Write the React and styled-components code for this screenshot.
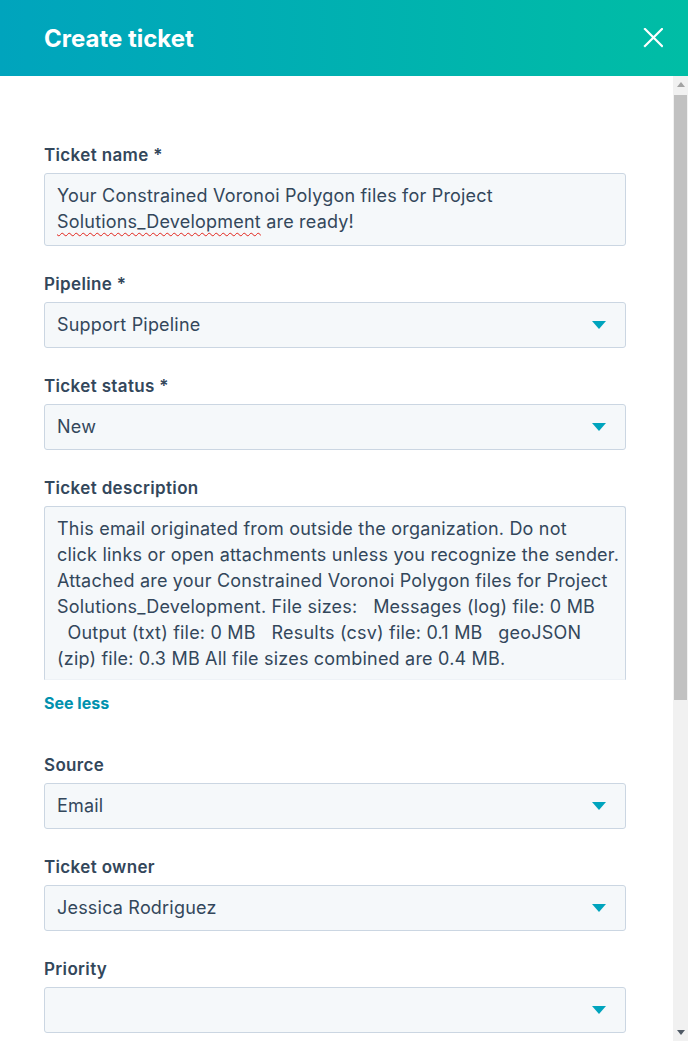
import React from 'react';
import styled, { createGlobalStyle } from 'styled-components';

const GlobalStyle = createGlobalStyle`
  html, body {
    margin: 0;
    padding: 0;
    height: 100%;
    overflow: hidden;
  }
  #root {
    height: 100%;
  }
  * {
    box-sizing: border-box;
  }
`;

const Panel = styled.div`
  height: 100vh;
  display: flex;
  flex-direction: column;
  font-family: Inter, "Liberation Sans", sans-serif;
  color: #33475b;
  background: #fff;
`;

const Header = styled.div`
  height: 76px;
  flex: none;
  display: flex;
  align-items: center;
  justify-content: space-between;
  padding: 0 24px 0 44px;
  background: linear-gradient(90deg, #00a4bd 0%, #00bda5 100%);
`;

const Title = styled.h1`
  margin: 0;
  font-size: 24px;
  font-weight: 700;
  color: #fff;
`;

const CloseButton = styled.button`
  width: 22px;
  height: 22px;
  padding: 0;
  border: none;
  background: transparent;
  display: flex;
  align-items: center;
  justify-content: center;
  cursor: pointer;
`;

const Body = styled.div`
  flex: 1;
  min-height: 0;
  display: flex;
`;

const Content = styled.div`
  flex: 1;
  overflow: hidden;
  padding: 68px 47px 0 44px;
`;

const Scrollbar = styled.div`
  width: 15px;
  flex: none;
  display: flex;
  flex-direction: column;
  background: #f1f1f1;
`;

const ScrollButton = styled.div`
  height: 17px;
  flex: none;
  display: flex;
  align-items: center;
  justify-content: center;
`;

const Track = styled.div`
  flex: 1;
  display: flex;
  flex-direction: column;
`;

const Thumb = styled.div`
  height: 605px;
  margin: 2px 1px 0 1px;
  background: #c1c1c1;
`;

const Field = styled.div`
  display: flex;
  flex-direction: column;
  margin-bottom: ${(p) => p.$gap || 27}px;
`;

const Label = styled.label`
  font-size: 17px;
  font-weight: 600;
  letter-spacing: 0.35px;
  line-height: 22px;
  margin-bottom: 7px;
`;

const Box = styled.div`
  background: #f5f8fa;
  border: 1px solid #cbd6e2;
  border-radius: 3px;
  padding: 9px 12px;
  font-size: 18px;
  letter-spacing: 0.2px;
  line-height: 26px;
  color: #33475b;
  white-space: pre;
  overflow: hidden;
`;

const NameBox = styled(Box)`
  height: 73px;
`;

const SelectBox = styled(Box)`
  height: 46px;
  display: flex;
  align-items: center;
  justify-content: space-between;
  padding-right: 19px;
`;

const DescriptionBox = styled(Box)`
  height: 174px;
  border-bottom-color: #eef2f6;
  border-radius: 3px 3px 0 0;
`;

const Misspelled = styled.span`
  text-decoration: underline wavy #e2231a;
  text-decoration-thickness: 1px;
  text-underline-offset: 4px;
`;

const TextLink = styled.a`
  align-self: flex-start;
  margin-top: 12px;
  font-size: 16px;
  font-weight: 700;
  line-height: 22px;
  color: #0091ae;
  text-decoration: none;
  cursor: pointer;
`;

const Caret = () => (
  <svg width="14" height="8" viewBox="0 0 14 8">
    <path d="M0 0 H14 L7 8 Z" fill="#00a4bd" />
  </svg>
);

function Select({ label, value }) {
  return (
    <Field>
      <Label>{label}</Label>
      <SelectBox>
        <span>{value}</span>
        <Caret />
      </SelectBox>
    </Field>
  );
}

export default function App() {
  return (
    <>
      <GlobalStyle />
      <Panel>
        <Header>
          <Title>Create ticket</Title>
          <CloseButton aria-label="Close">
            <svg width="20" height="20" viewBox="0 0 20 20">
              <path d="M2 1 L19 18 M19 1 L2 18" stroke="#fff" strokeWidth="2.2" strokeLinecap="square" />
            </svg>
          </CloseButton>
        </Header>
        <Body>
          <Content>
            <Field>
              <Label>Ticket name *</Label>
              <NameBox>
                {'Your Constrained Voronoi Polygon files for Project\n'}
                <Misspelled>Solutions_Development</Misspelled>
                {' are ready!'}
              </NameBox>
            </Field>
            <Select label="Pipeline *" value="Support Pipeline" />
            <Select label="Ticket status *" value="New" />
            <Field $gap={40}>
              <Label>Ticket description</Label>
              <DescriptionBox>
                {'This email originated from outside the organization. Do not\n' +
                  'click links or open attachments unless you recognize the sender.\n' +
                  'Attached are your Constrained Voronoi Polygon files for Project\n' +
                  'Solutions_Development. File sizes:   Messages (log) file: 0 MB\n' +
                  '  Output (txt) file: 0 MB   Results (csv) file: 0.1 MB   geoJSON\n' +
                  '(zip) file: 0.3 MB All file sizes combined are 0.4 MB.'}
              </DescriptionBox>
              <TextLink>See less</TextLink>
            </Field>
            <Select label="Source" value="Email" />
            <Select label="Ticket owner" value="Jessica Rodriguez" />
            <Select label="Priority" value="" />
          </Content>
          <Scrollbar>
            <ScrollButton>
              <svg width="8" height="5" viewBox="0 0 8 5">
                <path d="M0 5 H8 L4 0 Z" fill="#a3a3a3" />
              </svg>
            </ScrollButton>
            <Track>
              <Thumb />
            </Track>
            <ScrollButton>
              <svg width="8" height="5" viewBox="0 0 8 5">
                <path d="M0 0 H8 L4 5 Z" fill="#505a66" />
              </svg>
            </ScrollButton>
          </Scrollbar>
        </Body>
      </Panel>
    </>
  );
}
